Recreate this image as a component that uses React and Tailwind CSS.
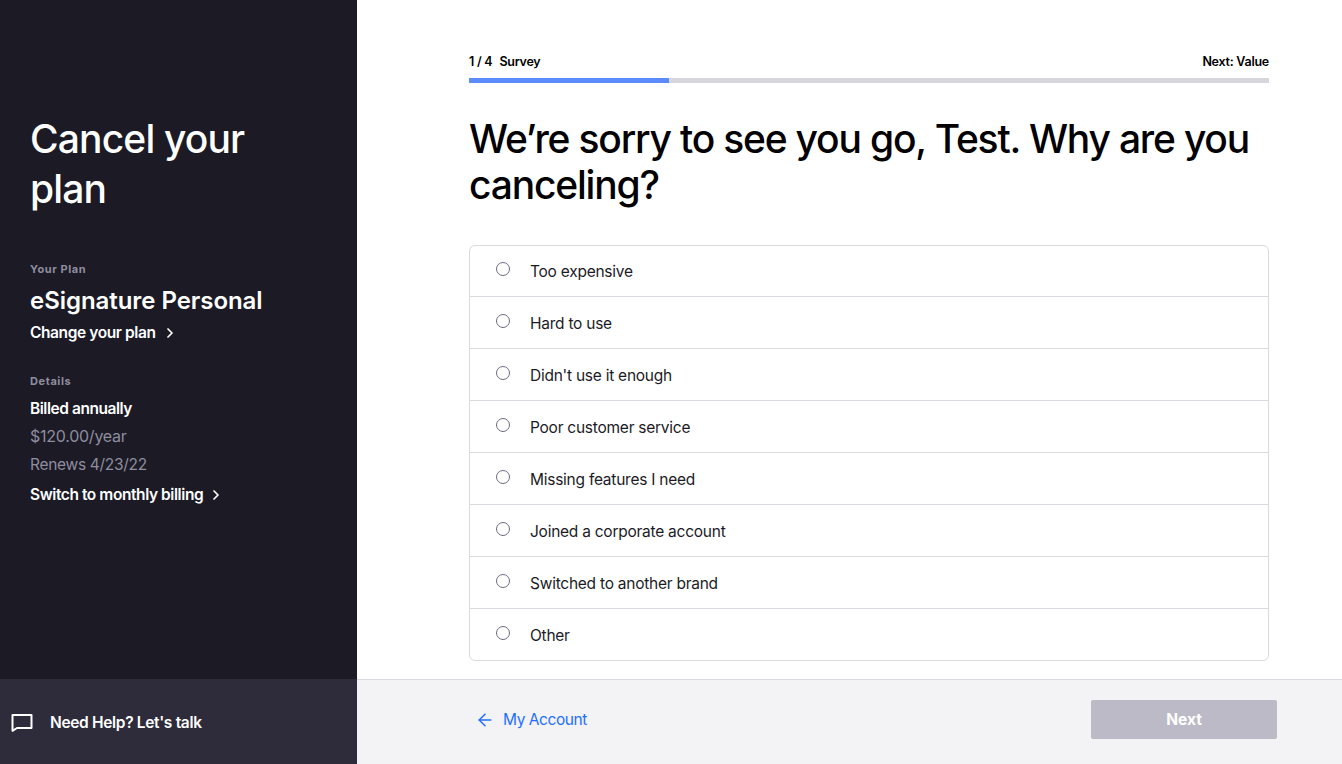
import React from "react";
import { ChevronRight, ArrowLeft } from "lucide-react";

const reasons = ["Too expensive","Hard to use","Didn't use it enough","Poor customer service","Missing features I need","Joined a corporate account","Switched to another brand","Other"];

function Chat() {
  return (
    <svg width="22" height="18" viewBox="0 0 22 18" fill="none" stroke="white" strokeWidth="2" className="shrink-0">
      <path d="M1.5 1h19v13H6L1.5 16.8z" strokeLinejoin="round" />
    </svg>
  );
}

export default function App() {
  return (
    <div className="flex h-[764px] w-[1342px] overflow-hidden bg-white font-['Inter',sans-serif]">
      <aside className="flex w-[357px] shrink-0 flex-col bg-[#1b1a25] text-white">
        <div className="flex-1 pl-[30px] pt-[114px]">
          <h1 className="text-[39px] font-medium leading-[50px] tracking-[-0.85px]">Cancel your<br />plan</h1>
          <div className="mt-[48px] text-[11px] font-bold leading-[14px] tracking-[0.6px] text-[#8f8d9f]">Your Plan</div>
          <div className="mt-[9px] text-[24px] font-semibold leading-[32px] tracking-[-0.05px]">eSignature Personal</div>
          <div className="mt-[4px] flex h-[24px] items-center text-[15.5px] font-semibold tracking-[-0.4px]">
            Change your plan
            <ChevronRight size={16} strokeWidth={2.6} className="ml-[6px]" />
          </div>
          <div className="mt-[29px] text-[11px] font-bold leading-[14px] tracking-[0.6px] text-[#8f8d9f]">Details</div>
          <div className="mt-[9px] text-[15.5px] font-semibold leading-[24px] tracking-[-0.45px]">Billed annually</div>
          <div className="mt-[3px] text-[16px] leading-[24px] tracking-[-0.25px] text-[#8f8d9f]">$120.00/year</div>
          <div className="mt-[5px] text-[15.5px] leading-[24px] tracking-[-0.3px] text-[#8f8d9f]">Renews 4/23/22</div>
          <div className="mt-[6px] flex h-[24px] items-center text-[15.5px] font-semibold tracking-[-0.42px]">
            Switch to monthly billing
            <ChevronRight size={16} strokeWidth={2.6} className="ml-[5px]" />
          </div>
        </div>
        <div className="flex h-[85px] items-center gap-[17px] bg-[#2e2b3b] pl-[11px] pt-[2px] text-[15.5px] font-semibold tracking-[-0.33px]">
          <Chat />
          Need Help? Let's talk
        </div>
      </aside>
      <main className="flex min-w-0 flex-1 flex-col">
        <div className="flex-1 pl-[112px] pr-[73px] pt-[53px]">
          <div className="flex h-[18px] items-center justify-between text-[12.5px] font-semibold tracking-[-0.25px] text-black">
            <span className="flex gap-[7px]"><span>1 / 4</span><span>Survey</span></span>
            <span>Next: Value</span>
          </div>
          <div className="mt-[7px] h-[5px] bg-[#d6d6dc]"><div className="h-full w-[200px] bg-[#5b8bff]" /></div>
          <h2 className="mt-[33px] text-[39px] font-medium leading-[46px] tracking-[-1.2px] text-black">We’re sorry to see you go, Test. Why are you canceling?</h2>
          <ul className="mt-[37px] overflow-hidden rounded-[6px] border border-[#d9d9df]">
            {reasons.map((r, i) => {
              const edge = i === 0 || i === reasons.length - 1;
              return (
                <li key={r} className={`flex items-start pl-[26px] ${i === 0 ? "pt-[16px]" : "pt-[17px]"} ${edge ? "h-[51px]" : "h-[52px]"} ${i < reasons.length - 1 ? "border-b border-[#d9d9df]" : ""}`}>
                  <span className="h-[14px] w-[14px] rounded-full border border-[#6d6a85] bg-white" />
                  <span className="-mt-[2px] ml-[20px] text-[15.5px] leading-[24px] tracking-[-0.25px] text-[#1c1b25]">{r}</span>
                </li>
              );
            })}
          </ul>
        </div>
        <div className="flex h-[85px] items-center justify-between border-t border-[#d9d9df] bg-[#f3f3f6] pb-[5px] pl-[118px] pr-[65px]">
          <div className="flex items-center gap-[8px] text-[15.5px] tracking-[-0.43px] text-[#1f6fff]">
            <ArrowLeft size={20} strokeWidth={1.8} />
            My Account
          </div>
          <button className="h-[39px] w-[186px] rounded-[2px] bg-[#bbbac6] text-[15.5px] font-bold text-white">Next</button>
        </div>
      </main>
    </div>
  );
}
